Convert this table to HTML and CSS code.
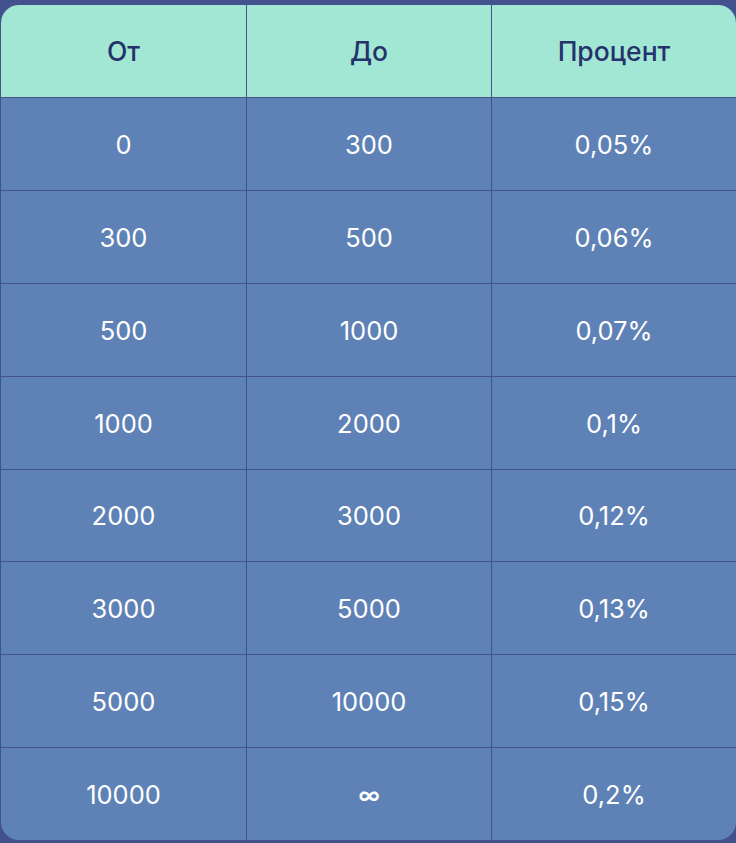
FILE: index.html
```html
<!DOCTYPE html>
<html lang="ru">
<head>
<meta charset="utf-8">
<link rel="stylesheet" href="styles.css">
</head>
<body>
<div class="rates">
  <div class="cell head">От</div>
  <div class="cell head">До</div>
  <div class="cell head">Процент</div>

  <div class="cell">0</div><div class="cell">300</div><div class="cell">0,05%</div>
  <div class="cell">300</div><div class="cell">500</div><div class="cell">0,06%</div>
  <div class="cell">500</div><div class="cell">1000</div><div class="cell">0,07%</div>
  <div class="cell">1000</div><div class="cell">2000</div><div class="cell">0,1%</div>
  <div class="cell">2000</div><div class="cell">3000</div><div class="cell">0,12%</div>
  <div class="cell">3000</div><div class="cell">5000</div><div class="cell">0,13%</div>
  <div class="cell">5000</div><div class="cell">10000</div><div class="cell">0,15%</div>
  <div class="cell">10000</div><div class="cell inf">∞</div><div class="cell">0,2%</div>
</div>
</body>
</html>
```
FILE: styles.css
```css
html, body {
  margin: 0;
  padding: 0;
  background: #44518f;
}
body {
  padding: 5px 0 0 1px;
  font-family: Inter, "Noto Sans", sans-serif;
}
.rates {
  width: 735px;
  height: 835px;
  display: grid;
  grid-template-columns: 245px 244px 244px;
  grid-template-rows: 92px repeat(8, 1fr);
  gap: 1px;
  background: #44518f;
  border-radius: 18px;
  overflow: hidden;
}
.cell {
  display: flex;
  align-items: center;
  justify-content: center;
  padding-top: 1px;
  background: #5f82b6;
  color: #ffffff;
  font-size: 25.5px;
  font-weight: 400;
}
.cell.head {
  padding-top: 0;
  background: #a2e7d3;
  color: #26326b;
  font-size: 26.5px;
  font-weight: 500;
}
.cell.inf {
  font-size: 22px;
  font-weight: 600;
}
```
